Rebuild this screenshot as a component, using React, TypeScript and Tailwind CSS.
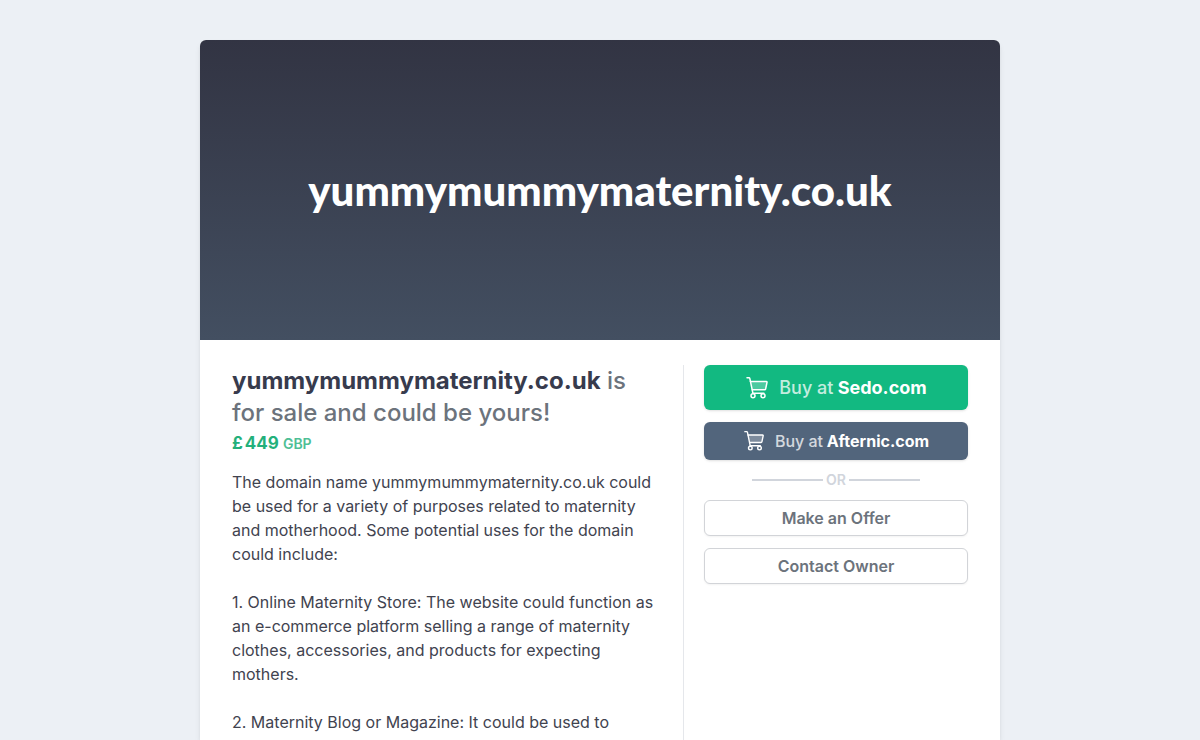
import type { ReactNode } from "react";

const DOMAIN = "yummymummymaternity.co.uk";

const description = [
  `The domain name ${DOMAIN} could be used for a variety of purposes related to maternity and motherhood. Some potential uses for the domain could include:`,
  "1. Online Maternity Store: The website could function as an e-commerce platform selling a range of maternity clothes, accessories, and products for expecting mothers.",
  "2. Maternity Blog or Magazine: It could be used to",
];

const CartIcon = ({ className }: { className: string }) => (
  <svg
    className={className}
    viewBox="0 0 24 24"
    fill="none"
    stroke="currentColor"
    strokeWidth="1.5"
    strokeLinecap="round"
    strokeLinejoin="round"
    aria-hidden="true"
  >
    <path d="M5.3 5.5h16.6l-1.7 8.2H7.1z" fill="currentColor" fillOpacity="0.25" stroke="none" />
    <path d="M2 1.8h2c.4 0 .7.2.8.6L7.9 17.2" />
    <path d="M5.4 5.5h16c.4 0 .7.4.6.8l-1.4 6.7c-.1.4-.4.7-.8.7H7.2" />
    <path d="M7.9 17.2h11" />
    <circle cx="8" cy="19.7" r="2" />
    <circle cx="18" cy="19.7" r="2" />
  </svg>
);

type BuyProps = {
  market: string;
  className: string;
  iconClassName: string;
};

const BuyButton = ({ market, className, iconClassName }: BuyProps) => (
  <button
    type="button"
    className={`flex w-full items-center justify-center rounded-md font-bold text-white shadow-sm ${className}`}
  >
    <CartIcon className={iconClassName} />
    <span>
      <span className="font-medium opacity-75">Buy at</span> {market}
    </span>
  </button>
);

const OutlineButton = ({ children }: { children: ReactNode }) => (
  <button
    type="button"
    className="h-9 w-full rounded-md border border-[#d2d4d8] bg-white font-semibold text-[#6c737c] shadow-xs"
  >
    {children}
  </button>
);

const App = () => {
  return (
    <div className="flex min-h-screen flex-col bg-[#ecf0f5] pt-10 font-['Inter',sans-serif] text-base">
      <main className="mx-auto flex w-full max-w-[800px] grow flex-col rounded-t-md bg-white shadow-md">
        <header className="flex h-[300px] items-center justify-center rounded-t-md bg-linear-to-b from-[#323443] to-[#434f61]">
          <h1 className="font-['Lato',sans-serif] text-[42px] font-black text-white">
            {DOMAIN}
          </h1>
        </header>

        <div className="flex grow gap-6 px-8 pt-[25px]">
          <section className="min-w-0 flex-1">
            <h2 className="text-2xl font-medium text-[#6c737c]">
              <span className="font-bold text-[#373b4d]">{DOMAIN}</span> is for
              sale and could be yours!
            </h2>
            <p className="flex items-baseline gap-1 text-[17px] leading-7 font-bold text-[#23b07b]">
              <span className="flex gap-0.5">
                <span>£</span>
                <span>449</span>
              </span>
              <span className="text-sm font-semibold opacity-80">GBP</span>
            </p>
            <div className="mt-[13px] space-y-6 text-[#41434f]">
              {description.map((text) => (
                <p key={text}>{text}</p>
              ))}
            </div>
          </section>

          <aside className="flex w-[285px] flex-col border-l border-gray-200 pl-5">
            <BuyButton
              market="Sedo.com"
              className="h-[45px] gap-[10px] bg-[#12b981] text-lg"
              iconClassName="size-6"
            />
            <BuyButton
              market="Afternic.com"
              className="mt-3 h-[38px] gap-[10px] bg-[#52657c] text-base"
              iconClassName="size-[22px]"
            />
            <div className="mx-12 flex h-10 items-center gap-[3px] text-sm font-semibold text-gray-300">
              <span className="h-0.5 flex-1 bg-gray-300" />
              OR
              <span className="h-0.5 flex-1 bg-gray-300" />
            </div>
            <div className="space-y-3">
              <OutlineButton>Make an Offer</OutlineButton>
              <OutlineButton>Contact Owner</OutlineButton>
            </div>
          </aside>
        </div>
      </main>
    </div>
  );
};

export default App;
